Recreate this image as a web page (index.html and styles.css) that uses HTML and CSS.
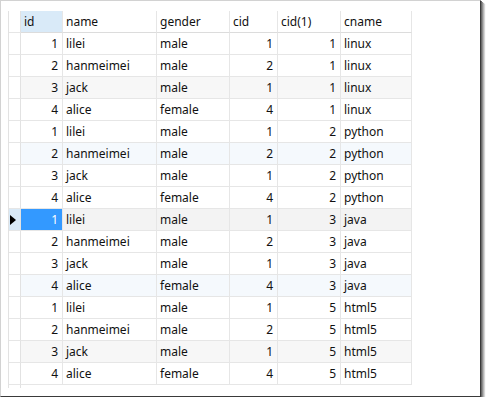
FILE: index.html
```html
<!DOCTYPE html>
<html>
<head>
<meta charset="utf-8">
<link rel="stylesheet" href="styles.css">
</head>
<body>
<div class="frame">
  <div class="grid">
    <div class="c ind"></div><div class="c hdr hsel">id</div><div class="c hdr">name</div><div class="c hdr">gender</div><div class="c hdr">cid</div><div class="c hdr">cid(1)</div><div class="c hdr">cname</div>

    <div class="c ind"></div><div class="c num">1</div><div class="c">lilei</div><div class="c">male</div><div class="c num">1</div><div class="c num">1</div><div class="c">linux</div>
    <div class="c ind"></div><div class="c num">2</div><div class="c">hanmeimei</div><div class="c">male</div><div class="c num">2</div><div class="c num">1</div><div class="c">linux</div>
    <div class="c ind"></div><div class="c num g">3</div><div class="c g">jack</div><div class="c g">male</div><div class="c num g">1</div><div class="c num g">1</div><div class="c g">linux</div>
    <div class="c ind"></div><div class="c num">4</div><div class="c">alice</div><div class="c">female</div><div class="c num">4</div><div class="c num">1</div><div class="c">linux</div>

    <div class="c ind"></div><div class="c num">1</div><div class="c">lilei</div><div class="c">male</div><div class="c num">1</div><div class="c num">2</div><div class="c">python</div>
    <div class="c ind"></div><div class="c num b">2</div><div class="c b">hanmeimei</div><div class="c b">male</div><div class="c num b">2</div><div class="c num b">2</div><div class="c b">python</div>
    <div class="c ind"></div><div class="c num">3</div><div class="c">jack</div><div class="c">male</div><div class="c num">1</div><div class="c num">2</div><div class="c">python</div>
    <div class="c ind"></div><div class="c num">4</div><div class="c">alice</div><div class="c">female</div><div class="c num">4</div><div class="c num">2</div><div class="c">python</div>

    <div class="c ind isel"><span class="tri"></span></div><div class="c num sel">1</div><div class="c s">lilei</div><div class="c s">male</div><div class="c num s">1</div><div class="c num s">3</div><div class="c s">java</div>
    <div class="c ind"></div><div class="c num">2</div><div class="c">hanmeimei</div><div class="c">male</div><div class="c num">2</div><div class="c num">3</div><div class="c">java</div>
    <div class="c ind"></div><div class="c num">3</div><div class="c">jack</div><div class="c">male</div><div class="c num">1</div><div class="c num">3</div><div class="c">java</div>
    <div class="c ind"></div><div class="c num b">4</div><div class="c b">alice</div><div class="c b">female</div><div class="c num b">4</div><div class="c num b">3</div><div class="c b">java</div>

    <div class="c ind"></div><div class="c num">1</div><div class="c">lilei</div><div class="c">male</div><div class="c num">1</div><div class="c num">5</div><div class="c">html5</div>
    <div class="c ind"></div><div class="c num">2</div><div class="c">hanmeimei</div><div class="c">male</div><div class="c num">2</div><div class="c num">5</div><div class="c">html5</div>
    <div class="c ind"></div><div class="c num g">3</div><div class="c g">jack</div><div class="c g">male</div><div class="c num g">1</div><div class="c num g">5</div><div class="c g">html5</div>
    <div class="c ind"></div><div class="c num">4</div><div class="c">alice</div><div class="c">female</div><div class="c num">4</div><div class="c num">5</div><div class="c">html5</div>

    <div class="tail"></div>
  </div>
</div>
</body>
</html>
```

FILE: styles.css
```css
html, body {
  margin: 0;
  padding: 0;
  background: #ffffff;
}

.frame {
  box-sizing: border-box;
  width: 481px;
  height: 397px;
  background: #ffffff;
  border-top: 1px solid #d2d2d2;
  border-left: 1px solid #d2d2d2;
  border-right: 1px solid #3a3a3a;
  border-bottom: 1px solid #3a3a3a;
  box-shadow: 1px 1px 0 #6a6a6a, 2px 2px 0 #8e8e8e, 3px 3px 1px #b5b5b5, 4px 4px 1px #dcdcdc;
  padding: 10px 0 0 7px;
}

.grid {
  display: grid;
  grid-template-columns: 12px 42px 94px 73px 48px 63px 71px;
  width: max-content;
  border-left: 1px solid #e2e2e2;
  font-family: "Noto Sans", "Liberation Sans", sans-serif;
  font-size: 12px;
  color: #111111;
}

.c {
  box-sizing: border-box;
  height: 22px;
  line-height: 21px;
  padding: 0 3px;
  border-right: 1px solid #e6e6e6;
  border-bottom: 1px solid #e6e6e6;
  white-space: nowrap;
  overflow: hidden;
  background: #ffffff;
}

.hdr {
  border-bottom-color: #dcdcdc;
}

.hsel {
  background: #d9eaf8;
}

.num {
  text-align: right;
  padding-right: 4px;
}

.ind {
  padding: 0;
  border-right-color: #e2e2e2;
}

.isel {
  background: #d9eaf8;
  display: flex;
  align-items: center;
}

.tri {
  display: block;
  width: 0;
  height: 0;
  margin-left: 1px;
  border-top: 5px solid transparent;
  border-bottom: 5px solid transparent;
  border-left: 6px solid #000000;
}

.g {
  background: #f7f7f7;
}

.b {
  background: #f5f9fd;
}

.s {
  background: #f3f3f3;
}

.sel {
  background: #3399ff;
  color: #ffffff;
}

.tail {
  box-sizing: border-box;
  height: 3px;
  border-right: 1px solid #e2e2e2;
}
```
